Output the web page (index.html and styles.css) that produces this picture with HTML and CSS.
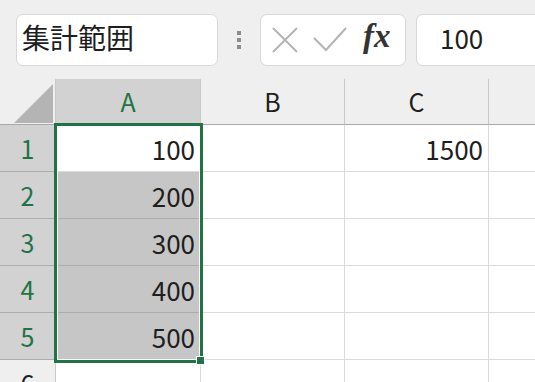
FILE: index.html
```html
<!DOCTYPE html>
<html lang="ja">
<head>
  <meta charset="UTF-8" />
  <title>集計範囲</title>
  <link rel="stylesheet" href="styles.css">
</head>
<body>

<div class="formula-bar">
  <div class="name-box">集計範囲</div>
  <div class="grip">
    <span></span><span></span><span></span>
  </div>
  <div class="fx-box">
    <svg class="icon" width="28" height="28" viewBox="0 0 28 28">
      <path d="M2 2 L26 26 M26 2 L2 26" stroke="#b4b4b4" stroke-width="2" fill="none"/>
    </svg>
    <svg class="icon" width="34" height="28" viewBox="0 0 34 28">
      <path d="M1 12 L13 24 L33 2" stroke="#b4b4b4" stroke-width="2" fill="none"/>
    </svg>
    <span class="fx">fx</span>
  </div>
  <div class="formula-input">100</div>
</div>

<div class="sheet">
  <div class="corner"><span class="tri"></span></div>
  <div class="col-head active">A</div>
  <div class="col-head">B</div>
  <div class="col-head">C</div>
  <div class="col-head last"></div>

  <div class="row-head active">1</div>
  <div class="cell">100</div>
  <div class="cell"></div>
  <div class="cell">1500</div>
  <div class="cell last"></div>

  <div class="row-head active">2</div>
  <div class="cell sel">200</div>
  <div class="cell"></div>
  <div class="cell"></div>
  <div class="cell last"></div>

  <div class="row-head active">3</div>
  <div class="cell sel">300</div>
  <div class="cell"></div>
  <div class="cell"></div>
  <div class="cell last"></div>

  <div class="row-head active">4</div>
  <div class="cell sel">400</div>
  <div class="cell"></div>
  <div class="cell"></div>
  <div class="cell last"></div>

  <div class="row-head active">5</div>
  <div class="cell sel">500</div>
  <div class="cell"></div>
  <div class="cell"></div>
  <div class="cell last"></div>

  <div class="row-head">6</div>
  <div class="cell"></div>
  <div class="cell"></div>
  <div class="cell"></div>
  <div class="cell last"></div>

  <div class="selection"><span class="handle"></span></div>
</div>

</body>
</html>
```

FILE: styles.css
```css
body {
  margin: 0;
  background-color: #efefef;
  font-family: "Noto Sans CJK JP", "Noto Sans", sans-serif;
  color: #1e1e1e;
  overflow: hidden;
}

.formula-bar {
  display: flex;
  align-items: center;
  height: 79px;
  padding-left: 16px;
  box-sizing: border-box;
}

.name-box,
.fx-box,
.formula-input {
  height: 52px;
  box-sizing: border-box;
  background: #fff;
  border: 1px solid #d9d9d9;
  border-radius: 7px;
  display: flex;
  align-items: center;
}

.name-box {
  width: 202px;
  padding: 0 0 6px 5px;
  font-size: 28px;
}

.grip {
  width: 42px;
  display: flex;
  flex-direction: column;
  align-items: center;
  gap: 3px;
}

.grip span {
  width: 4px;
  height: 4px;
  background: #8c8c8c;
}

.fx-box {
  width: 146px;
  padding-left: 10px;
  gap: 14px;
}

.fx {
  font-family: "Liberation Serif", serif;
  font-style: italic;
  font-weight: bold;
  font-size: 33px;
  color: #333;
  margin-left: 2px;
  padding-bottom: 6px;
}

.formula-input {
  flex: 1;
  margin-left: 10px;
  margin-right: -20px;
  padding: 0 0 4px 23px;
  font-size: 26px;
}

.sheet {
  position: relative;
  display: grid;
  grid-template-columns: 56px 145px 144px 144px 1fr;
  grid-template-rows: 46px repeat(6, 47px);
}

.corner {
  border-right: 1px solid #c8c8c8;
  border-bottom: 1px solid #a9a9a9;
  display: flex;
  align-items: flex-end;
  justify-content: flex-end;
  padding: 0 2px 1px 0;
}

.tri {
  width: 39px;
  height: 39px;
  background: #b4b4b4;
  clip-path: polygon(100% 0, 100% 100%, 0 100%);
}

.col-head {
  display: flex;
  align-items: center;
  justify-content: center;
  font-size: 25px;
  border-right: 1px solid #c8c8c8;
  border-bottom: 1px solid #a9a9a9;
  padding-bottom: 2px;
}

.col-head.active {
  background: #d2d2d2;
  color: #217346;
}

.row-head {
  display: flex;
  align-items: center;
  justify-content: center;
  font-size: 25px;
  border-right: 1px solid #c8c8c8;
  border-bottom: 1px solid #c8c8c8;
}

.row-head.active {
  background: #d2d2d2;
  color: #217346;
  border-bottom-color: #adadad;
}

.cell {
  background: #fff;
  border-right: 1px solid #dadada;
  border-bottom: 1px solid #dadada;
  display: flex;
  align-items: center;
  justify-content: flex-end;
  padding-right: 5px;
  font-size: 26px;
}

.cell.sel {
  background: #c6c6c6;
  border-bottom-color: #adadad;
}

.last {
  border-right: none;
}

.selection {
  position: absolute;
  left: 54px;
  top: 44px;
  width: 149px;
  height: 240px;
  box-sizing: border-box;
  border: 3px solid #217346;
  box-shadow: inset 0 0 0 1px #fff;
}

.handle {
  position: absolute;
  right: -5px;
  bottom: -5px;
  width: 7px;
  height: 7px;
  background: #217346;
  border: 1px solid #fff;
}
```
